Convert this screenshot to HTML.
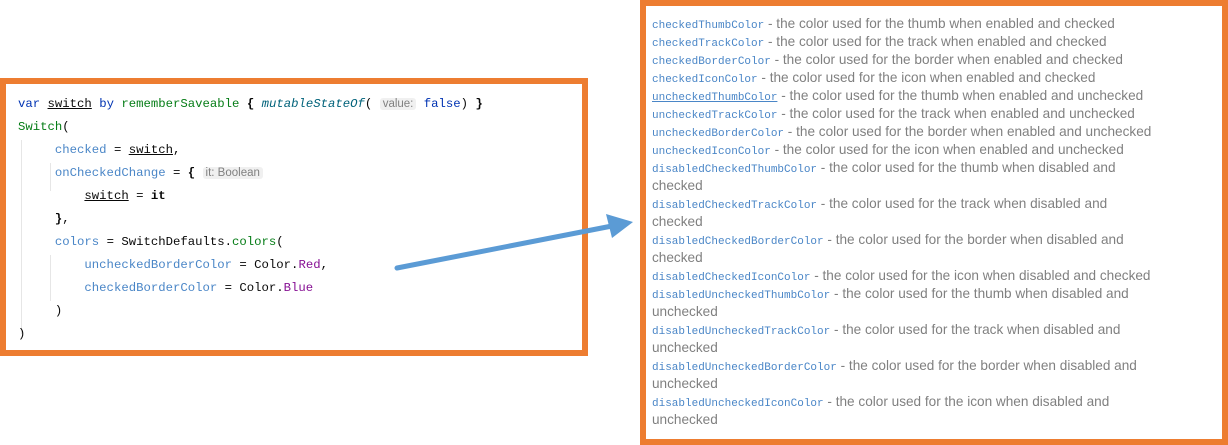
<!DOCTYPE html>
<html><head><style>
body{margin:0;width:1228px;height:445px;background:#fff;position:relative;overflow:hidden;font-family:"Liberation Sans",sans-serif}
.lb{position:absolute;left:0;top:78px;width:576px;height:266px;border:6px solid #ed7d31;background:#fff}
.rb{position:absolute;left:640px;top:0;width:576px;height:433px;border:6px solid #ed7d31;background:#fff}
.code{position:absolute;left:12px;top:9px;font-family:"Liberation Mono",monospace;font-size:12.3px;line-height:23px;color:#080808;white-space:pre}
.kw{color:#0033b3}.gr{color:#067d17}.pr{color:#4a86c7}.pu{color:#871094}.it{font-style:italic;color:#00627a}
.u{text-decoration:underline}
.hint{font-family:"Liberation Sans",sans-serif;font-size:11.5px;color:#808080;background:#f0f0f0;border-radius:3px;padding:0 3px}
.doc{position:absolute;left:6px;top:9px;font-size:13.6px;color:#808080;white-space:nowrap}
.doc div{height:18px;line-height:18px;overflow:visible}
.m{font-family:"Liberation Mono",monospace;font-size:11px;color:#4a86c7;line-height:18px}
.guide{position:absolute;border-left:1px solid #e6e6e6}
</style></head><body>
<div class="lb">
<div class="guide" style="left:15px;top:56px;height:194px"></div>
<div class="guide" style="left:44px;top:79px;height:28px"></div>
<div class="guide" style="left:44px;top:171px;height:46px"></div>
<div class="code"><span class="kw">var</span> <span class="u">switch</span> <span class="kw">by</span> <span class="gr">rememberSaveable</span> <b>{</b> <span class="it">mutableStateOf</span>( <span class="hint">value:</span> <span class="kw">false</span>) <b>}</b>
<span class="gr">Switch</span>(
     <span class="pr">checked</span> = <span class="u">switch</span>,
     <span class="pr">onCheckedChange</span> = <b>{</b> <span class="hint">it: Boolean</span>
         <span class="u">switch</span> = <b>it</b>
     <b>}</b>,
     <span class="pr">colors</span> = SwitchDefaults.<span class="gr">colors</span>(
         <span class="pr">uncheckedBorderColor</span> = Color.<span class="pu">Red</span>,
         <span class="pr">checkedBorderColor</span> = Color.<span class="pu">Blue</span>
     )
)</div>
</div>
<div class="rb"><div class="doc">
<div><span class="m">checkedThumbColor</span> - the color used for the thumb when enabled and checked</div>
<div><span class="m">checkedTrackColor</span> - the color used for the track when enabled and checked</div>
<div><span class="m">checkedBorderColor</span> - the color used for the border when enabled and checked</div>
<div><span class="m">checkedIconColor</span> - the color used for the icon when enabled and checked</div>
<div><span class="m u">uncheckedThumbColor</span> - the color used for the thumb when enabled and unchecked</div>
<div><span class="m">uncheckedTrackColor</span> - the color used for the track when enabled and unchecked</div>
<div><span class="m">uncheckedBorderColor</span> - the color used for the border when enabled and unchecked</div>
<div><span class="m">uncheckedIconColor</span> - the color used for the icon when enabled and unchecked</div>
<div><span class="m">disabledCheckedThumbColor</span> - the color used for the thumb when disabled and</div><div>checked</div>
<div><span class="m">disabledCheckedTrackColor</span> - the color used for the track when disabled and</div><div>checked</div>
<div><span class="m">disabledCheckedBorderColor</span> - the color used for the border when disabled and</div><div>checked</div>
<div><span class="m">disabledCheckedIconColor</span> - the color used for the icon when disabled and checked</div>
<div><span class="m">disabledUncheckedThumbColor</span> - the color used for the thumb when disabled and</div><div>unchecked</div>
<div><span class="m">disabledUncheckedTrackColor</span> - the color used for the track when disabled and</div><div>unchecked</div>
<div><span class="m">disabledUncheckedBorderColor</span> - the color used for the border when disabled and</div><div>unchecked</div>
<div><span class="m">disabledUncheckedIconColor</span> - the color used for the icon when disabled and</div><div>unchecked</div>
</div></div>
<svg style="position:absolute;left:0;top:0" width="1228" height="445">
<line x1="397" y1="268" x2="612" y2="226" stroke="#5b9bd5" stroke-width="5" stroke-linecap="round"/>
<polygon points="633,222 606,214 612,238" fill="#5b9bd5"/>
</svg>
</body></html>
